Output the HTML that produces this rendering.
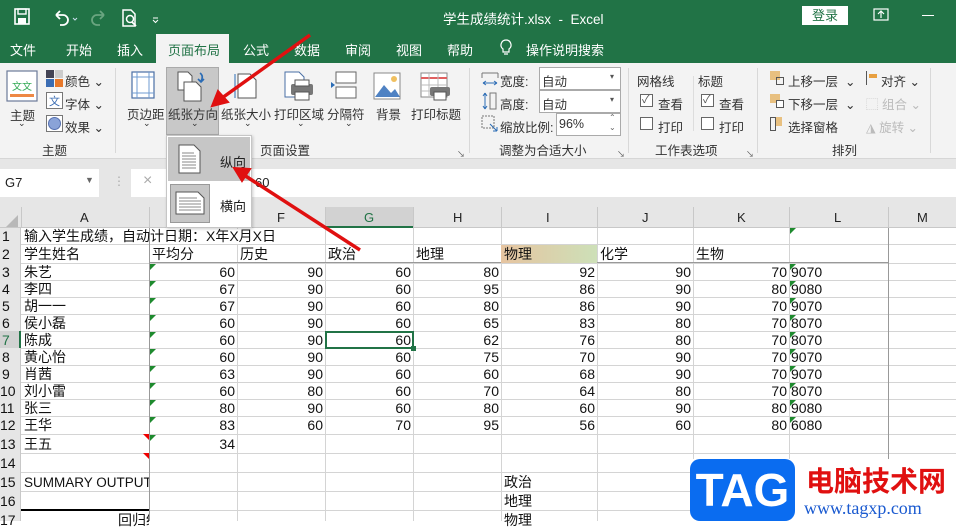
<!DOCTYPE html>
<html><head><meta charset="utf-8">
<style>
*{margin:0;padding:0;box-sizing:border-box}
body{width:956px;height:521px;overflow:hidden;position:relative;background:#fff;font-family:"Liberation Sans","Noto Sans CJK SC",sans-serif;font-size:13px;color:#222}
.a{position:absolute;white-space:nowrap}
.w{color:#fff}
.rb{font-size:12.5px;color:#333}
.c{position:absolute;font-size:14px;line-height:17px;white-space:nowrap;color:#111}
.r{text-align:right}
.hl{position:absolute;left:0;width:888px;height:1px;background:#d4d4d4}
.vl{position:absolute;top:228px;width:1px;height:293px;background:#d4d4d4}
.tri{position:absolute;width:0;height:0;border-top:6px solid #1e8a2e;border-right:6px solid transparent}
.trr{position:absolute;width:0;height:0;border-top:6px solid #e00;border-left:6px solid transparent}
.cb{position:absolute;width:13px;height:13px;border:1px solid #666;background:#fff}
</style></head><body>
<!-- title bar -->
<div class="a" style="left:0;top:0;width:956px;height:63px;background:#217346"></div>
<svg class="a" style="left:10px;top:6px" width="150" height="22" viewBox="0 0 150 22">
<rect x="5" y="3" width="14" height="15" fill="none" stroke="#fff" stroke-width="1.6"/><rect x="8" y="3" width="8" height="5" fill="none" stroke="#fff" stroke-width="1.4"/><rect x="8" y="12" width="8" height="6" fill="#fff"/>
<path d="M46 9 h7 a5 5 0 0 1 0 10 h-3" fill="none" stroke="#fff" stroke-width="1.8"/><path d="M46 9 l4 -4 M46 9 l4 4" stroke="#fff" stroke-width="1.8"/>
<path d="M63 12 l2 2 2-2" fill="none" stroke="#cde" stroke-width="1"/>
<path d="M94 9 h-7 a5 5 0 0 0 0 10 h3" fill="none" stroke="#6aa580" stroke-width="1.8"/><path d="M94 9 l-4 -4 M94 9 l-4 4" stroke="#6aa580" stroke-width="1.8"/>
<path d="M113 4 h8 l4 4 v12 h-12 z" fill="none" stroke="#fff" stroke-width="1.5"/><circle cx="120" cy="13" r="3.5" fill="none" stroke="#fff" stroke-width="1.5"/><path d="M122 16 l4 4" stroke="#fff" stroke-width="1.8"/>
<path d="M143 12 h5 M143 14 l2.5 2.5 2.5-2.5" fill="none" stroke="#fff" stroke-width="1"/>
</svg>
<div class="a w" style="left:443px;top:8px;font-size:13.5px">学生成绩统计.xlsx&nbsp; - &nbsp;Excel</div>
<div class="a" style="left:802px;top:6px;width:46px;height:19px;background:#fff;color:#217346;font-size:13px;text-align:center;line-height:19px">登录</div>
<svg class="a" style="left:873px;top:8px" width="16" height="14"><rect x="1" y="1" width="14" height="11" fill="none" stroke="#fff" stroke-width="1.2"/><path d="M8 10 V4 M5 6 l3-3 3 3" fill="none" stroke="#fff" stroke-width="1.2"/></svg>
<div class="a" style="left:922px;top:15px;width:12px;height:1px;background:#fff"></div>
<!-- tabs -->
<div class="a" style="left:156px;top:34px;width:73px;height:29px;background:#f3f3f3"></div>
<div class="a w" style="left:10px;top:40px;font-size:13px">文件</div>
<div class="a w" style="left:66px;top:40px;font-size:13px">开始</div>
<div class="a w" style="left:117px;top:40px;font-size:13px">插入</div>
<div class="a" style="left:168px;top:40px;font-size:13px;color:#217346">页面布局</div>
<div class="a w" style="left:243px;top:40px;font-size:13px">公式</div>
<div class="a w" style="left:294px;top:40px;font-size:13px">数据</div>
<div class="a w" style="left:345px;top:40px;font-size:13px">审阅</div>
<div class="a w" style="left:396px;top:40px;font-size:13px">视图</div>
<div class="a w" style="left:447px;top:40px;font-size:13px">帮助</div>
<svg class="a" style="left:499px;top:39px" width="14" height="18"><path d="M7 1 a5 5 0 0 1 3 9 v3 h-6 v-3 a5 5 0 0 1 3-9z M5 15 h4" fill="none" stroke="#fff" stroke-width="1.2"/></svg>
<div class="a w" style="left:526px;top:40px;font-size:13px">操作说明搜索</div>
<!-- ribbon -->
<div class="a" style="left:0;top:63px;width:956px;height:95px;background:#f3f3f3"></div>
<div class="a" style="left:0;top:158px;width:956px;height:10px;background:#e6e6e6;border-top:1px solid #d6d6d6"></div>
<svg class="a" style="left:6px;top:70px" width="32" height="32"><rect x="1" y="1" width="30" height="30" fill="#fff" stroke="#6b7a99" stroke-width="1.2"/><text x="6" y="20" font-size="10" fill="#3a5">文文</text><rect x="4" y="24" width="24" height="3" fill="#e84"/></svg>
<div class="a rb" style="left:10px;top:105px">主题</div>
<div class="a rb" style="left:18px;top:118px;font-size:9px">⌄</div>
<svg class="a" style="left:46px;top:70px" width="18" height="18"><rect x="0" y="0" width="8" height="8" fill="#445"/><rect x="9" y="0" width="8" height="8" fill="#ccc"/><rect x="0" y="9" width="8" height="8" fill="#3b6db3"/><rect x="9" y="9" width="8" height="8" fill="#e8792b"/></svg>
<div class="a rb" style="left:65px;top:71px">颜色 ⌄</div>
<svg class="a" style="left:46px;top:92px" width="18" height="18"><rect x="0.5" y="0.5" width="16" height="16" fill="#fff" stroke="#777"/><text x="3" y="13" font-size="11" fill="#3b6db3">文</text></svg>
<div class="a rb" style="left:65px;top:94px">字体 ⌄</div>
<svg class="a" style="left:46px;top:115px" width="18" height="18"><rect x="0.5" y="0.5" width="16" height="16" fill="#fff" stroke="#777"/><circle cx="8.5" cy="8.5" r="6" fill="#8aa3d8" stroke="#5570b0"/></svg>
<div class="a rb" style="left:65px;top:117px">效果 ⌄</div>
<div class="a rb" style="left:42px;top:140px">主题</div>
<div class="a" style="left:115px;top:68px;width:1px;height:85px;background:#d8d8d8"></div>
<svg class="a" style="left:130px;top:70px" width="28" height="30"><rect x="2" y="2" width="22" height="26" fill="#fff" stroke="#4a6fa5" stroke-width="1.2"/><path d="M7 2v26M19 2v26M2 7h22M2 23h22" stroke="#6f9bd1" stroke-width="1"/></svg>
<div class="a rb" style="left:127px;top:104px">页边距</div>
<div class="a rb" style="left:143px;top:118px;font-size:9px">⌄</div>
<div class="a" style="left:166px;top:67px;width:53px;height:68px;background:#c8c8c8;border:1px solid #aaa"></div>
<svg class="a" style="left:174px;top:70px" width="36" height="32"><path d="M4 2h10l4 4v14h-14z" fill="#fff" stroke="#555"/><path d="M10 12h12l5 5v14h-17z" fill="#fff" stroke="#555"/><path d="M26 3 q4 3 1 8 M24 9 l3 3 3-3" fill="none" stroke="#2b6cb5" stroke-width="1.6"/></svg>
<div class="a rb" style="left:168px;top:104px">纸张方向</div>
<div class="a rb" style="left:191px;top:118px;font-size:9px">⌄</div>
<svg class="a" style="left:232px;top:70px" width="28" height="30"><path d="M6 4h12l6 6v18h-18z" fill="#fff" stroke="#555"/><path d="M3 4v24" stroke="#2b6cb5"/></svg>
<div class="a rb" style="left:221px;top:104px">纸张大小</div>
<div class="a rb" style="left:244px;top:118px;font-size:9px">⌄</div>
<svg class="a" style="left:283px;top:70px" width="32" height="32"><path d="M2 2h14l5 5v20h-19z" fill="#fff" stroke="#4a6fa5"/><rect x="8" y="14" width="22" height="11" rx="2" fill="#777"/><rect x="12" y="10" width="14" height="6" fill="#fff" stroke="#555"/><rect x="12" y="22" width="14" height="8" fill="#fff" stroke="#555"/></svg>
<div class="a rb" style="left:274px;top:104px">打印区域</div>
<div class="a rb" style="left:297px;top:118px;font-size:9px">⌄</div>
<svg class="a" style="left:330px;top:70px" width="28" height="30"><rect x="6" y="2" width="20" height="11" fill="#fff" stroke="#666"/><rect x="6" y="17" width="20" height="11" fill="#fff" stroke="#666"/><path d="M1 12l4 3-4 3z" fill="#2b6cb5"/></svg>
<div class="a rb" style="left:327px;top:104px">分隔符</div>
<div class="a rb" style="left:345px;top:118px;font-size:9px">⌄</div>
<svg class="a" style="left:373px;top:72px" width="28" height="28"><rect x="1" y="1" width="26" height="26" fill="#fff" stroke="#888"/><path d="M2 25 l9-12 7 8 4-4 5 8z" fill="#4f82c3"/><circle cx="21" cy="7" r="3" fill="#f0c060"/></svg>
<div class="a rb" style="left:376px;top:104px">背景</div>
<svg class="a" style="left:420px;top:72px" width="32" height="30"><rect x="1" y="1" width="26" height="24" fill="#fff" stroke="#888"/><path d="M1 6h26" stroke="#e06060" stroke-width="2"/><path d="M9 1v24M18 1v24M1 13h26M1 19h26" stroke="#bbb"/><rect x="10" y="15" width="20" height="9" rx="2" fill="#777"/><rect x="14" y="20" width="12" height="8" fill="#fff" stroke="#555"/></svg>
<div class="a rb" style="left:411px;top:104px">打印标题</div>
<div class="a rb" style="left:260px;top:140px">页面设置</div>
<div class="a" style="left:457px;top:149px;font-size:8px;color:#555">↘</div>
<div class="a" style="left:469px;top:68px;width:1px;height:85px;background:#d8d8d8"></div>
<svg class="a" style="left:481px;top:70px" width="18" height="18"><path d="M1 3h16M1 3v5M17 3v5" stroke="#777" fill="none"/><path d="M2 13h14M2 13l3-2M2 13l3 2M16 13l-3-2M16 13l-3 2" stroke="#2b6cb5" fill="none"/></svg>
<div class="a rb" style="left:500px;top:71px">宽度:</div>
<div class="a" style="left:539px;top:67px;width:82px;height:23px;background:#fff;border:1px solid #aaa"></div>
<div class="a rb" style="left:542px;top:71px">自动</div><div class="a" style="left:610px;top:72px;font-size:8px;color:#555">▾</div>
<svg class="a" style="left:481px;top:92px" width="18" height="18"><rect x="9" y="1" width="6" height="16" fill="none" stroke="#777"/><path d="M4 1v16M4 1l-2 3M4 1l2 3M4 17l-2-3M4 17l2-3" stroke="#2b6cb5" fill="none"/></svg>
<div class="a rb" style="left:500px;top:94px">高度:</div>
<div class="a" style="left:539px;top:90px;width:82px;height:23px;background:#fff;border:1px solid #aaa"></div>
<div class="a rb" style="left:542px;top:94px">自动</div><div class="a" style="left:610px;top:95px;font-size:8px;color:#555">▾</div>
<svg class="a" style="left:481px;top:115px" width="18" height="18"><rect x="1" y="1" width="12" height="12" fill="none" stroke="#777" stroke-dasharray="2 1"/><path d="M9 9l7 7M16 16h-4M16 16v-4" stroke="#2b6cb5" fill="none"/></svg>
<div class="a rb" style="left:500px;top:117px">缩放比例:</div>
<div class="a" style="left:556px;top:113px;width:65px;height:23px;background:#fff;border:1px solid #aaa"></div>
<div class="a rb" style="left:559px;top:117px">96%</div>
<div class="a" style="left:609px;top:113px;font-size:8px;color:#666;line-height:10px">⌃<br>⌄</div>
<div class="a rb" style="left:499px;top:140px">调整为合适大小</div>
<div class="a" style="left:617px;top:149px;font-size:8px;color:#555">↘</div>
<div class="a" style="left:628px;top:68px;width:1px;height:85px;background:#d8d8d8"></div>
<div class="a rb" style="left:637px;top:71px">网格线</div>
<div class="a rb" style="left:698px;top:71px">标题</div>
<div class="a" style="left:693px;top:76px;width:1px;height:55px;background:#ddd"></div>
<div class="cb" style="left:640px;top:94px"></div><div class="a" style="left:642px;top:91px;font-size:11px;color:#555">✓</div>
<div class="a rb" style="left:658px;top:94px">查看</div>
<div class="cb" style="left:701px;top:94px"></div><div class="a" style="left:703px;top:91px;font-size:11px;color:#555">✓</div>
<div class="a rb" style="left:719px;top:94px">查看</div>
<div class="cb" style="left:640px;top:117px"></div><div class="a rb" style="left:658px;top:117px">打印</div>
<div class="cb" style="left:701px;top:117px"></div><div class="a rb" style="left:719px;top:117px">打印</div>
<div class="a rb" style="left:655px;top:140px">工作表选项</div>
<div class="a" style="left:746px;top:149px;font-size:8px;color:#555">↘</div>
<div class="a" style="left:757px;top:68px;width:1px;height:85px;background:#d8d8d8"></div>
<div class="a" style="left:770px;top:71px;width:10px;height:9px;background:#e8c080"></div><div class="a" style="left:776px;top:77px;width:8px;height:8px;border:1px solid #555"></div>
<div class="a rb" style="left:788px;top:71px">上移一层 &nbsp;⌄</div>
<div class="a" style="left:770px;top:94px;width:10px;height:9px;background:#e8c080"></div><div class="a" style="left:776px;top:100px;width:8px;height:8px;border:1px solid #555;background:#fff"></div>
<div class="a rb" style="left:788px;top:94px">下移一层 &nbsp;⌄</div>
<div class="a" style="left:770px;top:117px;width:6px;height:14px;border:1px solid #555"></div><div class="a" style="left:776px;top:117px;width:6px;height:9px;background:#e8c080"></div>
<div class="a rb" style="left:788px;top:117px">选择窗格</div>
<div class="a" style="left:866px;top:71px;width:3px;height:14px;border-left:1px solid #555"></div><div class="a" style="left:869px;top:74px;width:8px;height:4px;background:#e8a040"></div>
<div class="a rb" style="left:881px;top:71px">对齐 ⌄</div>
<div class="a rb" style="left:866px;top:94px;color:#bbb">⬚ 组合 ⌄</div>
<div class="a rb" style="left:866px;top:117px;color:#bbb">◮ 旋转 ⌄</div>
<div class="a rb" style="left:832px;top:140px">排列</div>
<div class="a" style="left:930px;top:68px;width:1px;height:85px;background:#d8d8d8"></div>
<!-- formula bar -->
<div class="a" style="left:0;top:168px;width:956px;height:39px;background:#e6e6e6"></div>
<div class="a" style="left:0;top:169px;width:99px;height:28px;background:#fff"></div>
<div class="a" style="left:5px;top:175px;font-size:13px">G7</div>
<div class="a" style="left:85px;top:175px;font-size:9px;color:#666">▼</div>
<div class="a" style="left:113px;top:174px;font-size:12px;color:#aaa">⋮</div>
<div class="a" style="left:131px;top:169px;width:825px;height:28px;background:#fff"></div>
<div class="a" style="left:143px;top:172px;font-size:16px;color:#aaa">×</div>
<div class="a" style="left:255px;top:175px;font-size:13px">60</div>
<!-- column headers -->
<div class="a" style="left:0;top:207px;width:956px;height:21px;background:#e6e6e6;border-bottom:1px solid #c8c8c8"></div>
<div class="a" style="left:6px;top:215px;width:0;height:0;border-left:12px solid transparent;border-bottom:12px solid #b8b8b8"></div>
<div class="a" style="left:325px;top:207px;width:88px;height:21px;background:#d2d2d2;border-bottom:2px solid #217346"></div>
<div class="a" style="left:80px;top:210px;font-size:13px">A</div>
<div class="a" style="left:277px;top:210px;font-size:13px">F</div>
<div class="a" style="left:364px;top:210px;font-size:13px;color:#217346">G</div>
<div class="a" style="left:453px;top:210px;font-size:13px">H</div>
<div class="a" style="left:546px;top:210px;font-size:13px">I</div>
<div class="a" style="left:642px;top:210px;font-size:13px">J</div>
<div class="a" style="left:737px;top:210px;font-size:13px">K</div>
<div class="a" style="left:834px;top:210px;font-size:13px">L</div>
<div class="a" style="left:917px;top:210px;font-size:13px">M</div>
<div class="a" style="left:21px;top:207px;width:1px;height:21px;background:#c8c8c8"></div>
<div class="a" style="left:149px;top:207px;width:1px;height:21px;background:#c8c8c8"></div>
<div class="a" style="left:325px;top:207px;width:1px;height:21px;background:#c8c8c8"></div>
<div class="a" style="left:413px;top:207px;width:1px;height:21px;background:#c8c8c8"></div>
<div class="a" style="left:501px;top:207px;width:1px;height:21px;background:#c8c8c8"></div>
<div class="a" style="left:597px;top:207px;width:1px;height:21px;background:#c8c8c8"></div>
<div class="a" style="left:693px;top:207px;width:1px;height:21px;background:#c8c8c8"></div>
<div class="a" style="left:789px;top:207px;width:1px;height:21px;background:#c8c8c8"></div>
<div class="a" style="left:888px;top:207px;width:1px;height:21px;background:#c8c8c8"></div>
<div class="a" style="left:0;top:228px;width:21px;height:293px;background:#e6e6e6;border-right:1px solid #c8c8c8"></div>
<div class="a" style="left:0;top:331px;width:21px;height:17px;background:#d2d2d2;border-right:2px solid #217346"></div>
<!-- grid lines -->
<div class="hl" style="top:244px;left:21px;width:935px"></div>
<div class="hl" style="top:263px;left:21px;width:935px"></div>
<div class="hl" style="top:280px;left:21px;width:935px"></div>
<div class="hl" style="top:297px;left:21px;width:935px"></div>
<div class="hl" style="top:314px;left:21px;width:935px"></div>
<div class="hl" style="top:331px;left:21px;width:935px"></div>
<div class="hl" style="top:348px;left:21px;width:935px"></div>
<div class="hl" style="top:365px;left:21px;width:935px"></div>
<div class="hl" style="top:382px;left:21px;width:935px"></div>
<div class="hl" style="top:399px;left:21px;width:935px"></div>
<div class="hl" style="top:416px;left:21px;width:935px"></div>
<div class="hl" style="top:434px;left:21px;width:935px"></div>
<div class="hl" style="top:453px;left:21px;width:935px"></div>
<div class="hl" style="top:472px;left:21px;width:935px"></div>
<div class="hl" style="top:491px;left:21px;width:935px"></div>
<div class="hl" style="top:510px;left:21px;width:935px"></div>
<div class="a" style="left:21px;top:509px;width:128px;height:2px;background:#000"></div>
<div class="vl" style="left:149px;background:#999"></div>
<div class="vl" style="left:237px"></div>
<div class="vl" style="left:325px"></div>
<div class="vl" style="left:413px"></div>
<div class="vl" style="left:501px"></div>
<div class="vl" style="left:597px"></div>
<div class="vl" style="left:693px"></div>
<div class="vl" style="left:789px"></div>
<div class="vl" style="left:888px;background:#999;height:235px"></div>
<div class="a" style="left:150px;top:229px;width:175px;height:15px;background:#fff"></div>
<div class="a" style="left:149px;top:262px;width:740px;height:1px;background:#999"></div>
<div class="a" style="left:501px;top:245px;width:96px;height:18px;background:linear-gradient(90deg,#e6c4a0,#cde0b8)"></div>
<div class="a" style="left:325px;top:331px;width:89px;height:18px;border:2px solid #217346"></div>
<div class="a" style="left:411px;top:346px;width:5px;height:5px;background:#217346"></div>
<!-- row numbers -->
<div class="c" style="left:2px;top:228px">1</div><div class="c" style="left:2px;top:246px">2</div>
<div class="c" style="left:2px;top:264px">3</div><div class="c" style="left:2px;top:281px">4</div>
<div class="c" style="left:2px;top:298px">5</div><div class="c" style="left:2px;top:315px">6</div>
<div class="c" style="left:2px;top:332px;color:#217346">7</div><div class="c" style="left:2px;top:349px">8</div>
<div class="c" style="left:2px;top:366px">9</div><div class="c" style="left:0;top:383px">10</div>
<div class="c" style="left:0;top:400px">11</div><div class="c" style="left:0;top:417px">12</div>
<div class="c" style="left:0;top:436px">13</div><div class="c" style="left:0;top:455px">14</div>
<div class="c" style="left:0;top:474px">15</div><div class="c" style="left:0;top:493px">16</div>
<div class="c" style="left:0;top:512px">17</div>
<!-- cells -->
<div class="c" style="left:24px;top:228px">输入学生成绩，自动计日期：X年X月X日</div>
<div class="c" style="left:24px;top:246px">学生姓名</div>
<div class="c" style="left:152px;top:246px">平均分</div>
<div class="c" style="left:240px;top:246px">历史</div>
<div class="c" style="left:328px;top:246px">政治</div>
<div class="c" style="left:416px;top:246px">地理</div>
<div class="c" style="left:504px;top:246px">物理</div>
<div class="c" style="left:600px;top:246px">化学</div>
<div class="c" style="left:696px;top:246px">生物</div>
<div class="c" style="left:24px;top:264px">朱艺</div>
<div class="c" style="left:24px;top:281px">李四</div>
<div class="c" style="left:24px;top:298px">胡一一</div>
<div class="c" style="left:24px;top:315px">侯小磊</div>
<div class="c" style="left:24px;top:332px">陈成</div>
<div class="c" style="left:24px;top:349px">黄心怡</div>
<div class="c" style="left:24px;top:366px">肖茜</div>
<div class="c" style="left:24px;top:383px">刘小雷</div>
<div class="c" style="left:24px;top:400px">张三</div>
<div class="c" style="left:24px;top:417px">王华</div>
<div class="c" style="left:24px;top:436px">王五</div>
<div class="c" style="left:24px;top:474px;font-size:13.5px;width:125px;overflow:hidden">SUMMARY OUTPUT</div>
<div class="c" style="left:118px;top:512px;width:31px;overflow:hidden">回归统</div>
<div class="c" style="left:504px;top:474px">政治</div>
<div class="c" style="left:504px;top:493px">地理</div>
<div class="c" style="left:504px;top:512px">物理</div>
<!-- numeric columns -->
<div class="c r" style="left:150px;top:264px;width:85px;line-height:17px">60<br>67<br>67<br>60<br>60<br>60<br>63<br>60<br>80<br>83</div>
<div class="c r" style="left:150px;top:436px;width:85px">34</div>
<div class="c r" style="left:238px;top:264px;width:85px">90<br>90<br>90<br>90<br>90<br>90<br>90<br>80<br>90<br>60</div>
<div class="c r" style="left:326px;top:264px;width:85px">60<br>60<br>60<br>60<br>60<br>60<br>60<br>60<br>60<br>70</div>
<div class="c r" style="left:414px;top:264px;width:85px">80<br>95<br>80<br>65<br>62<br>75<br>60<br>70<br>80<br>95</div>
<div class="c r" style="left:502px;top:264px;width:93px">92<br>86<br>86<br>83<br>76<br>70<br>68<br>64<br>60<br>56</div>
<div class="c r" style="left:598px;top:264px;width:93px">90<br>90<br>90<br>80<br>80<br>90<br>90<br>80<br>90<br>60</div>
<div class="c r" style="left:694px;top:264px;width:93px">70<br>80<br>70<br>70<br>70<br>70<br>70<br>70<br>80<br>80</div>
<div class="c" style="left:791px;top:264px">9070<br>9080<br>9070<br>8070<br>8070<br>9070<br>9070<br>8070<br>9080<br>6080</div>
<div class="tri" style="left:150px;top:264px"></div><div class="tri" style="left:150px;top:281px"></div><div class="tri" style="left:150px;top:298px"></div><div class="tri" style="left:150px;top:315px"></div><div class="tri" style="left:150px;top:332px"></div><div class="tri" style="left:150px;top:349px"></div><div class="tri" style="left:150px;top:366px"></div><div class="tri" style="left:150px;top:383px"></div><div class="tri" style="left:150px;top:400px"></div><div class="tri" style="left:150px;top:417px"></div><div class="tri" style="left:150px;top:435px"></div>
<div class="tri" style="left:790px;top:264px"></div><div class="tri" style="left:790px;top:281px"></div><div class="tri" style="left:790px;top:298px"></div><div class="tri" style="left:790px;top:315px"></div><div class="tri" style="left:790px;top:332px"></div><div class="tri" style="left:790px;top:349px"></div><div class="tri" style="left:790px;top:366px"></div><div class="tri" style="left:790px;top:383px"></div><div class="tri" style="left:790px;top:400px"></div><div class="tri" style="left:790px;top:417px"></div><div class="tri" style="left:790px;top:228px"></div>
<div class="trr" style="left:143px;top:434px"></div><div class="trr" style="left:143px;top:453px"></div>
<!-- dropdown -->
<div class="a" style="left:166px;top:135px;width:86px;height:93px;background:#fff;border:1px solid #c6c6c6;box-shadow:1px 1px 3px rgba(0,0,0,.2)"></div>
<div class="a" style="left:168px;top:137px;width:82px;height:44px;background:#c6c6c6"></div>
<svg class="a" style="left:178px;top:144px" width="24" height="30"><path d="M1 1h15l6 6v22h-21z" fill="#fff" stroke="#555"/><path d="M4 9h12M4 12h14M4 15h14M4 18h14M4 21h14M4 24h14" stroke="#888"/></svg>
<div class="a" style="left:220px;top:152px;font-size:13px">纵向</div>
<div class="a" style="left:170px;top:184px;width:40px;height:39px;background:#c6c6c6;border:1px solid #999"></div>
<svg class="a" style="left:175px;top:191px" width="30" height="24"><path d="M1 1h22l6 6v16h-28z" fill="#fff" stroke="#555"/><path d="M4 7h18M4 10h22M4 13h22M4 16h22M4 19h22" stroke="#888"/></svg>
<div class="a" style="left:220px;top:196px;font-size:13px">横向</div>
<svg class="a" style="left:0;top:0" width="956" height="521">
<path d="M310 35 L222 98" stroke="#e01010" stroke-width="3.5"/><path d="M212 106 L218 91 L228 102z" fill="#e01010" stroke="#e01010" stroke-width="2"/>
<path d="M360 250 L244 175" stroke="#e01010" stroke-width="3.5"/><path d="M234 168 L250 169 L242 181z" fill="#e01010" stroke="#e01010" stroke-width="2"/>
</svg>
<!-- watermark -->
<div class="a" style="left:690px;top:459px;width:266px;height:62px;background:#fff"></div>
<div class="a" style="left:690px;top:459px;width:105px;height:62px;background:#0a6cf0;border-radius:10px;color:#fff;font-weight:bold;font-size:46px;line-height:62px;text-align:center;font-family:'Liberation Sans',sans-serif">TAG</div>
<div class="a" style="left:806px;top:463px;color:#e01010;font-size:28px;font-weight:bold;font-family:'Noto Sans CJK SC',sans-serif;line-height:34px">电脑技术网</div>
<div class="a" style="left:804px;top:498px;color:#1a5ad0;font-size:18px;font-family:'Liberation Serif',serif;line-height:20px">www.tagxp.com</div>
</body></html>
